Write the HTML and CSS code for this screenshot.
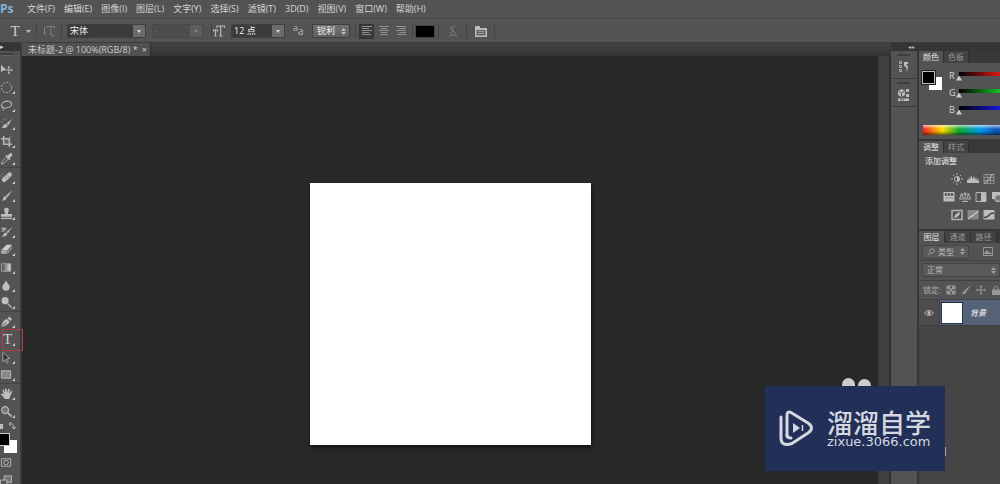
FILE: index.html
```html
<!DOCTYPE html>
<html lang="zh-CN">
<head>
<meta charset="utf-8">
<title>未标题-2</title>
<link rel="stylesheet" href="styles.css">
</head>
<body>
<div class="app">
  <header class="menubar">
    <span class="logo">Ps</span>
    <nav class="menus">
      <button>文件(F)</button><button>编辑(E)</button><button>图像(I)</button><button>图层(L)</button><button>文字(Y)</button><button>选择(S)</button><button>滤镜(T)</button><button>3D(D)</button><button>视图(V)</button><button>窗口(W)</button><button>帮助(H)</button>
    </nav>
  </header>

  <div class="options">
    <button class="opt-tool" aria-label="文字工具"><span class="serif-t">T</span><svg width="5" height="3" viewBox="0 0 5 3"><path d="M0 0h5L2.500 3z"/></svg></button>
    <i class="sep"></i>
    <button class="opt-orient" aria-label="切换文本取向"><svg width="12" height="12" viewBox="0 0 12 12"><path d="M4 3.500V1.500h7.500v2M7.700 1.500v7.500M6.500 9h2.500M1.500 2v7M0 7.500L1.500 9.500 3 7.500M8 11h3M10 9.500l1.500 1.500" fill="none" stroke="currentColor"/></svg></button>
    <i class="sep"></i>
    <div class="combo font"><select aria-label="字体"><option>宋体</option></select><span class="drop"></span></div>
    <div class="combo style"><select aria-label="字体样式" disabled><option>-</option></select><span class="drop"></span></div>
    <i class="sep"></i>
    <svg class="size-icon" width="12" height="12" viewBox="0 0 12 12"><path d="M4 3V1h7.500v2M7.700 1v10M6 11h3.500M.5 6.500V5h4v1.500M2.500 5v6M1.500 11h2" fill="none" stroke="currentColor" stroke-width="1.200"/></svg>
    <div class="combo size"><select aria-label="字号"><option>12 点</option></select><span class="drop"></span></div>
    <span class="aa"><sup>a</sup>a</span>
    <div class="spin sharp"><select aria-label="消除锯齿"><option>锐利</option></select><svg width="5" height="7" viewBox="0 0 5 7"><path d="M0 3l2.500-3L5 3zM0 4h5L2.500 7z"/></svg></div>
    <i class="sep"></i>
    <div class="aligns">
      <button class="on" aria-label="左对齐"><svg width="10" height="10" viewBox="0 0 10 10"><path d="M0 .5h10M0 2.500h7M0 4.500h10M0 6.500h7M0 8.500h9"/></svg></button>
      <button aria-label="居中对齐"><svg width="10" height="10" viewBox="0 0 10 10"><path d="M0 .5h10M2 2.500h6M0 4.500h10M2 6.500h6M1 8.500h8"/></svg></button>
      <button aria-label="右对齐"><svg width="10" height="10" viewBox="0 0 10 10"><path d="M0 .5h10M3 2.500h7M0 4.500h10M3 6.500h7M1 8.500h9"/></svg></button>
    </div>
    <i class="sep"></i>
    <button class="text-color" aria-label="文本颜色"></button>
    <i class="sep"></i>
    <button class="warp" aria-label="变形文字"><svg width="10" height="12" viewBox="0 0 10 12"><path d="M7 0Q6 3 2 4M2.500 1.500L5 5Q5 7 2 8M5 5.500L8 8M1 11.500Q5 8 9 11.500" fill="none" stroke="currentColor"/></svg></button>
    <i class="sep"></i>
    <button class="panel-btn" aria-label="字符面板"><svg width="12" height="11" viewBox="0 0 12 11"><path d="M0 0h5v2h7v9H0z" fill="#bbb"/><path d="M1.500 4h9v5.500h-9z" fill="#666"/><path d="M3 5.500h6M3 7.500h6" stroke="#999"/></svg></button>
    <i class="sep"></i>
  </div>

  <main class="workspace">
    <aside class="toolbox">
      <div class="collapse">▸</div>
      <div class="grip"></div>
      <div class="tools">
        <button aria-label="移动"><svg viewBox="0 0 14 14"><path d="M1 2v8l2.300-2L7 7.500z"/><path d="M9.500 4v7M6 7.500h7" class="l"/><path d="M9.500 3l1.500 2H8zM9.500 12L8 10h3zM14 7.500L12 6v3z"/></svg></button>
        <button class="more" aria-label="椭圆选框"><svg viewBox="0 0 14 14"><circle cx="7" cy="7" r="5.500" class="l" stroke-dasharray="2.300 1.200"/></svg></button>
        <button class="more" aria-label="套索"><svg viewBox="0 0 14 14"><ellipse cx="7" cy="6" rx="5.500" ry="3.500" class="l" stroke-width="1.300" transform="rotate(-12 7 6)"/><path d="M3 8q-2 1 0 2t0 3" class="l"/></svg></button>
        <button class="more" aria-label="快速选择"><svg viewBox="0 0 14 14"><path d="M13 2L7 7l2 2zM6.500 7.500Q4 7 3.500 9.500T1 11q5 2.500 7.500-1.500z"/><path d="M2 6q0-4 5-4" class="l" stroke-dasharray="1.500 1.500" stroke-width=".7"/></svg></button>
        <button class="more" aria-label="裁剪"><svg viewBox="0 0 14 14"><path d="M4 1v9h9M1 4h9v9" class="l" stroke-width="1.700"/><path d="M5 9L12 1" class="l" stroke-width=".6"/></svg></button>
        <button class="more" aria-label="吸管"><svg viewBox="0 0 14 14"><path d="M1.500 13l1-3L7 5.500 9 7.500 4.500 12z" class="l"/><path d="M6 4l1-1 1.500 1L10 2q2-2 3 0t-1 3l-1.500 1.500L11 8l-1 1z"/></svg></button>
        <button class="more" aria-label="修复画笔"><svg viewBox="0 0 14 14"><rect x="1" y="4.500" width="13" height="5" rx="2.500" transform="rotate(-43 7 7)"/><path d="M5 6l3 3M7 4l3 3" stroke="#888"/><path d="M1 6q0-4 4-4" class="l" stroke-dasharray="1 1" stroke-width=".7"/></svg></button>
        <button class="more" aria-label="画笔"><svg viewBox="0 0 14 14"><path d="M13.500 1L6.500 7l1.500 2zM6 7.500Q3.500 7.500 3.500 10T1 12q5 1.500 6.500-2.500z"/></svg></button>
        <button class="more" aria-label="仿制图章"><svg viewBox="0 0 14 14"><path d="M5.500 7.500q0-2-1-3.500a2.600 2.600 0 1 1 5 0q-1 1.500-1 3.500H13v3H1v-3zM1 11.500h12v1.300H1z"/></svg></button>
        <button class="more" aria-label="历史记录画笔"><svg viewBox="0 0 14 14"><path d="M13.500 2L7 7.500l1.500 1.500zM6.500 8Q4 8 4 10t-3 2q5 1.500 7-2z"/><path d="M1 3h6l-3 3z"/><path d="M1 6.500q4 1 6-2" class="l"/></svg></button>
        <button class="more" aria-label="橡皮擦"><svg viewBox="0 0 14 14"><path d="M7 2h6L8 8H1z" fill="#ccc"/><path d="M1 8.500h7v3H1z" fill="#aaa"/><path d="M8.500 8.300L13 3v3L8.500 11.500z" fill="#888"/></svg></button>
        <button class="more" aria-label="渐变"><svg viewBox="0 0 14 14"><defs><linearGradient id="gradient-tool"><stop stop-color="#444"/><stop offset="1" stop-color="#ddd"/></linearGradient></defs><path d="M1.500 3h10v8h-10z" fill="url(#gradient-tool)" stroke="#aaa"/></svg></button>
        <button class="more" aria-label="模糊"><svg viewBox="0 0 14 14"><path d="M6.500 1C7 4 10.500 6 10.500 8.700a4 4 0 0 1-8 0C2.500 6 6 4 6.500 1z"/></svg></button>
        <button class="more" aria-label="减淡"><svg viewBox="0 0 14 14"><circle cx="5.500" cy="5" r="3.800"/><path d="M8 8l4.500 4.500" class="l" stroke-width="1.500"/></svg></button>
        <button class="more" aria-label="钢笔"><svg viewBox="0 0 14 14"><path d="M1 13Q2 7 7 4l3.500 3.500Q7 12 1 13zM8 3.500l2-2L13 4.500l-2 2z"/><path d="M1.500 12.500L6.500 8" stroke="#555"/></svg></button>
        <button class="more picked" aria-label="横排文字"><span class="serif-t">T</span></button>
        <button class="more" aria-label="路径选择"><svg viewBox="0 0 14 14"><path d="M3 1.500v10l2.500-2.300L7.500 13l1.500-1-2-3.500 3.500-.5z" fill="#333" stroke="#aaa"/></svg></button>
        <button class="more" aria-label="矩形"><svg viewBox="0 0 14 14"><path d="M1.500 3h10v8h-10z" fill="#888" stroke="#bbb"/></svg></button>
        <button class="more" aria-label="抓手"><svg viewBox="0 0 14 14"><path d="M5 13Q3.500 10 1 8q0-1.500 2-.5L4 8 2.500 3q1-1 1.800.3L5.500 6.500 5.500 2q1-1.500 1.700 0l.3 4.300L9 2q1.500-.7 1.500.6L9.800 7 12 4q1.500 0 1 1.300L11 10l-1 3z"/></svg></button>
        <button class="more" aria-label="缩放"><svg viewBox="0 0 14 14"><circle cx="5.500" cy="5.500" r="3.700" fill="#777" stroke="#bbb" stroke-width="1.300"/><path d="M8.500 8.500l4 4" class="l" stroke-width="2"/></svg></button>
      </div>
      <svg class="swap" width="17" height="9" viewBox="0 0 17 9"><path d="M0 3h3v5H0z"/><path d="M10 3q4-1 4 4M11 1L9 3l2 2M12 6l2 2 2-2" class="l"/></svg>
      <div class="tool-colors"><button class="bg" aria-label="背景色"></button><button class="fg" aria-label="前景色"></button></div>
      <button class="mode" aria-label="快速蒙版"><svg viewBox="0 0 14 14"><path d="M1.500 3h10v8h-10z" class="l"/><circle cx="6.500" cy="7" r="2.500" class="l"/></svg></button>
      <button class="mode" aria-label="屏幕模式"><svg viewBox="0 0 14 14"><path d="M4.500 2h8v7h-8z" fill="#777" stroke="#bbb"/><path d="M.5 6.500h7v5h-7z" fill="#555" stroke="#bbb"/></svg></button>
    </aside>

    <section class="document">
      <div class="tabstrip"><div class="doc-tab"><span>未标题-2 @ 100%(RGB/8) *</span><button aria-label="关闭">×</button></div></div>
      <div class="view">
        <div class="stage"><div class="paper"></div></div>
        <div class="scroll"></div>
      </div>
    </section>

    <div class="docks">
      <div class="dock-head">◂◂</div>
      <div class="dock-cols">
        <div class="dock">
          <button aria-label="历史记录"><svg width="12" height="14" viewBox="0 0 12 14"><path d="M1.500 1.500h2v2h-2zM1.500 5.500h2v2h-2zM1.500 9.500h2v2h-2z" fill="none" stroke="#aaa"/><path d="M6 2h4v2H8q4 3 0 8 2-5-2-6z"/></svg></button>
          <button aria-label="属性"><svg width="12" height="14" viewBox="0 0 12 14"><path d="M3.500 1L7 3v4L3.500 9 0 7V3z" fill="#bbb"/><path d="M.5 3l3 2 3-2M3.500 5v3.500" fill="none" stroke="#555"/><path d="M8 1h3v3H8zM8 6h3v3H8zM0 10.500h11v2.500H0z"/><path d="M2 11.800h4" stroke="#666"/></svg></button>
        </div>
        <div class="panels">
          <section class="panel color">
            <div class="tabs"><button class="active">颜色</button><button>色板</button></div>
            <div class="color-body">
              <div class="chips"><button class="bg" aria-label="背景色"></button><button class="fg" aria-label="前景色"></button></div>
              <div class="sliders">
                <label><span>R</span><input class="r" type="range" min="0" max="255" value="0"></label>
                <label><span>G</span><input class="g" type="range" min="0" max="255" value="0"></label>
                <label><span>B</span><input class="b" type="range" min="0" max="255" value="0"></label>
              </div>
            </div>
            <div class="spectrum"></div>
          </section>
          <section class="panel adjust">
            <div class="tabs"><button class="active">调整</button><button>样式</button></div>
            <p>添加调整</p>
            <div class="icons in"><svg viewBox="0 0 12 12"><circle cx="6" cy="6" r="2.500" class="l"/><path d="M6 3.500a2.500 2.500 0 0 1 0 5z"/><path d="M6 0v2M6 10v2M0 6h2M10 6h2M2 2l1.200 1.200M8.800 8.800L10 10M2 10l1.200-1.200M8.800 3.200L10 2" class="l"/></svg><svg viewBox="0 0 12 12"><path d="M0 10V6l1 2 1-4 1 3 1-5 1.500 4L7 3l1 4 1-3 1 4 1-3 1 4v1z"/></svg><svg viewBox="0 0 12 12"><path d="M1 1.500h10v9H1zM4.300 1v9M7.600 1v9M1 4.500h10M1 7.500h10" class="l" stroke-width=".6"/><path d="M1 10Q6 9 7 5t4-4" class="l"/></svg></div>
            <div class="icons"><svg viewBox="0 0 12 12"><path d="M.5 1h11v9.500H.5z"/><path d="M2 2.500h2v2H2zM5 2.500h2v2H5zM8 2.500h2v2H8zM2 7h8" fill="#555" stroke="#555" stroke-width=".5"/></svg><svg viewBox="0 0 12 12"><path d="M1.500 3h9M6 1v9M3 10.500h6M2.500 3L.5 8h4zM9.500 3l-2 5h4z" class="l"/></svg><svg viewBox="0 0 12 12"><path d="M1 1.500h10v9H1z" class="l"/><path d="M6 2h5v8H6z"/></svg><svg viewBox="0 0 12 12"><path d="M1 1h9v7H1z"/><circle cx="7" cy="7" r="3.500" fill="#777" stroke="#ccc"/></svg></div>
            <div class="icons in"><svg viewBox="0 0 12 12"><path d="M1 1.500h10v9H1z" class="l" stroke-width="1.500"/><path d="M3 9Q4 4 9 3 9 8 3 9z"/></svg><svg viewBox="0 0 12 12"><path d="M.5 1h11v9.500H.5z" fill="#888"/><path d="M1 10l3-3h2l2-3h2l1-2" stroke="#ddd" fill="none"/></svg><svg viewBox="0 0 12 12"><path d="M.5 1h11v9.500H.5z"/><path d="M1 8.500l3-.5 4-3.500 3-.5" stroke="#444" stroke-width="1.500" fill="none"/></svg></div>
          </section>
          <section class="panel layers">
            <div class="tabs"><button class="active">图层</button><button>通道</button><button>路径</button></div>
            <div class="filter">
              <div class="spin kind"><svg width="8" height="8" viewBox="0 0 8 8"><circle cx="5" cy="3" r="2.300" class="l"/><path d="M3.300 4.700L1 7.500" class="l"/></svg><select aria-label="滤镜类型"><option>类型</option></select><svg width="5" height="7" viewBox="0 0 5 7"><path d="M0 3l2.500-3L5 3zM0 4h5L2.500 7z"/></svg></div>
              <svg width="10" height="9" viewBox="0 0 10 9"><path d="M.5.500h9v8h-9z" class="l"/><path d="M1 7l3-4 2 3 1-1 2 2z"/></svg>
            </div>
            <div class="blend"><div class="spin"><select aria-label="混合模式"><option>正常</option></select><svg width="5" height="7" viewBox="0 0 5 7"><path d="M0 3l2.500-3L5 3zM0 4h5L2.500 7z"/></svg></div></div>
            <div class="lock"><span>锁定:</span><svg viewBox="0 0 10 10"><path d="M1 1h8v8H1z" class="l"/><path d="M1 1h3v3H1zM6 1h3v3H6zM3.500 3.500h3v3h-3zM1 6h3v3H1zM6 6h3v3H6z"/></svg><svg viewBox="0 0 10 10"><path d="M10 0L4 5l1.500 1.500zM4 5.500Q2 5.500 2 8L0 9q4 1 5.500-2z"/></svg><svg viewBox="0 0 10 10"><path d="M5 1v8M1 5h8" class="l"/><path d="M5 0l1.500 2h-3zM5 10L3.500 8h3zM0 5l2-1.500v3zM10 5L8 6.500v-3z"/></svg><svg viewBox="0 0 10 10"><path d="M1 4.500h8V10H1z"/><path d="M3 5V3q0-2 2-2t2 2v2" class="l"/></svg></div>
            <div class="layer"><button class="eye" aria-label="可见性"><svg width="10" height="8" viewBox="0 0 10 8"><path d="M.5 4Q5-1 9.500 4 5 9 .5 4z" class="l"/><circle cx="5" cy="4" r="1.700"/></svg></button><div class="layer-main"><span class="thumb"></span><span class="name">背景</span></div></div>
          </section>
        </div>
      </div>
    </div>
  </main>

  <div class="watermark">
    <i class="ear left"></i><i class="ear right"></i><i class="tick"></i>
    <svg width="36" height="38" viewBox="0 0 36 38"><path d="M8 26V5Q8 1 12 2.500L29 13q7 5 0 10L13 33.500Q2 37 2 28V7" fill="none" stroke="#d5d8e0" stroke-width="3" stroke-linecap="round"/><path d="M8 25q0 3 4 3" fill="none" stroke="#d5d8e0" stroke-width="3" stroke-linecap="round"/><path d="M14 13l7 5-7 5z" fill="#d5d8e0"/><path d="M23.500 15v6" stroke="#d5d8e0" stroke-width="1.500"/></svg>
    <div class="brand"><strong>溜溜自学</strong><span>zixue.3066.com</span></div>
  </div>
</div>
</body>
</html>
```

FILE: styles.css
```css
* { box-sizing: border-box; }
body {
  margin: 0;
  background: #282828;
  color: #d6d6d6;
  font-family: "Open Sans", "Noto Sans CJK SC", sans-serif;
  font-size: 9px;
  line-height: 12px;
}
button, select, input { font: inherit; color: inherit; margin: 0; padding: 0; border: 0; background: none; }
button { display: flex; align-items: center; justify-content: center; }
svg { display: block; flex: none; fill: #bdbdbd; }
.l { fill: none; stroke: #b4b4b4; }
.app { position: relative; display: flex; flex-direction: column; height: 100vh; overflow: hidden; }

.menubar { display: flex; align-items: center; height: 19px; flex: none; background: #535353; border-bottom: 1px solid #434343; }
.logo { width: 24px; color: #7fb2dc; font: bold 12px/16px "Open Sans", sans-serif; }
.menus { display: flex; gap: 9px; padding-left: 3px; white-space: nowrap; }

.options { display: flex; align-items: center; height: 24px; flex: none; background: #535353; border-top: 1px solid #606060; border-bottom: 1px solid #3b3b3b; white-space: nowrap; }
.sep { width: 1px; height: 14px; flex: none; background: #444; }
.serif-t { font: 15px/16px "Liberation Serif", serif; color: #ccc; }
.opt-tool { gap: 6px; padding-left: 5px; width: 36px; }
.opt-orient { width: 24px; color: #808080; }
.combo { position: relative; height: 14px; background: #3b3b3b; border: 1px solid #404040; color: #eee; }
.combo select { width: 100%; height: 12px; padding-left: 2px; appearance: none; line-height: 12px; display: block; }
.drop { position: absolute; top: 0; right: 0; width: 12px; height: 12px; background: #6b6b6b; pointer-events: none; }
.drop::after { content: ""; position: absolute; left: 4px; top: 5px; border: 2px solid transparent; border-top: 3px solid #ddd; }
.font { width: 79px; margin-left: 5px; }
.style { width: 51px; margin: 0 8px 0 6px; background: #4d4d4d; border-color: #494949; color: #777; }
.style .drop { background: #5d5d5d; }
.style .drop::after { border-top-color: #888; }
.size-icon { color: #bbb; margin-left: 1px; }
.size { width: 54px; margin-left: 6px; }
.aa { width: 27px; padding-left: 8px; font-size: 10px; color: #bbb; }
.aa sup { font-size: 9px; line-height: 1px; }
.spin { display: flex; align-items: center; height: 14px; padding: 0 3px 0 4px; border: 1px solid #3e3e3e; border-radius: 1px; background: linear-gradient(#707070, #606060); }
.spin select { appearance: none; flex: 1; min-width: 0; height: 12px; line-height: 12px; }
.sharp { width: 38px; color: #eee; }
.sharp + .sep { margin-left: 5px; }
.aligns { display: flex; gap: 2px; padding: 0 4px 0 3px; }
.aligns button { width: 15px; height: 15px; }
.aligns .on { background: #3a3a3a; border: 1px solid #333; }
.aligns svg { stroke: #909090; }
.text-color { width: 18px; height: 11px; margin: 0 4px 0 3px; background: #000; outline: 1px solid #444; }
.warp { width: 27px; color: #808080; }
.panel-btn { width: 27px; }

.workspace { display: flex; flex: 1; min-height: 0; }
.toolbox { width: 22px; flex: none; background: #535353; border-right: 2px solid #3a3a3a; overflow: visible; }
.collapse { height: 8px; background: #353535; font-size: 7px; line-height: 8px; }
.grip { width: 14px; height: 3px; margin: 2px 0 4px; background: #3e3e3e; border-bottom: 1px solid #626262; }
.tools { display: flex; flex-direction: column; }
.tools button { position: relative; width: 20px; height: 18px; justify-content: flex-start; }
.tools svg, .mode svg { width: 13px; height: 13px; }
.tools .serif-t { padding-left: 3px; }
.more::after { content: ""; position: absolute; right: 5px; bottom: 2px; border-left: 3px solid transparent; border-bottom: 3px solid #ccc; }
.picked::before { content: ""; position: absolute; inset: -1px -3px -3px 2px; border: 1px solid #b23c40; }
.picked { z-index: 1; }
.tools button:nth-child(6), .tools button:nth-child(14), .tools button:nth-child(18) { border-bottom: 1px solid #444; }
.swap { margin: 1px 0 3px; }
.tool-colors { position: relative; width: 17px; height: 20px; }
.tool-colors button { position: absolute; width: 13px; height: 13px; }
.tool-colors .bg { left: 4px; top: 7px; background: #fff; }
.tool-colors .fg { left: -3px; top: 0; background: #000; border: 1px solid #ccc; }
.mode { height: 18px; }

.document { display: flex; flex-direction: column; flex: 1; min-width: 0; }
.tabstrip { height: 13px; flex: none; background: linear-gradient(#434343, #333); }
.doc-tab { display: inline-flex; align-items: center; height: 13px; padding: 0 3px 0 6px; gap: 4px; background: #505050; border-right: 1px solid #2d2d2d; color: #ccc; font-size: 9px; line-height: 12px; white-space: nowrap; vertical-align: top; }
.doc-tab { margin: 0; }
.view { display: flex; flex: 1; min-height: 0; }
.stage { flex: 1; padding-top: 127px; background: #282828; }
.paper { width: 281px; height: 262px; margin: 0 auto; background: #fff; box-shadow: 1px 2px 3px #111; }
.scroll { width: 13px; flex: none; background: #404040; border-right: 2px solid #303030; border-left: 1px solid #353535; }

.docks { width: 109px; flex: none; display: flex; flex-direction: column; background: #454545; }
.dock-head { height: 8px; flex: none; padding-left: 17px; background: #353535; color: #bbb; font-size: 6px; line-height: 8px; }
.dock-cols { display: flex; flex: 1; min-height: 0; }
.dock { width: 28px; flex: none; background: #535353; border-right: 2px solid #373737; }
.dock button { width: 100%; height: 28px; padding-top: 4px; border-bottom: 1px solid #3c3c3c; background: linear-gradient(#3e3e3e, #3e3e3e) 6px 3px / 13px 2px no-repeat; }
.panels { flex: 1; min-width: 0; overflow: hidden; }
.panel { background: #535353; font-size: 8px; white-space: nowrap; overflow: hidden; }
.tabs { display: flex; height: 12px; background: #383838; }
.tabs button { width: 25px; flex: none; line-height: 12px; color: #999; border-right: 1px solid #303030; background: #424242; }
.tabs .active { background: #535353; color: #e0e0e0; }
.color { height: 90px; border-bottom: 2px solid #363636; }
.color-body { display: flex; gap: 7px; padding: 4px 0 0 3px; }
.chips { position: relative; width: 20px; height: 20px; margin-top: 4px; flex: none; }
.chips button { position: absolute; width: 13px; height: 13px; }
.chips .bg { left: 7px; top: 6px; background: #fff; }
.chips .fg { left: 0; top: 0; background: #000; border: 1px solid #bbb; outline: 1px solid #222; }
.sliders { flex: 1; min-width: 0; }
.sliders label { display: flex; align-items: center; height: 17px; }
.sliders span { width: 7px; flex: none; font-size: 9px; }
.sliders input { appearance: none; width: 44px; height: 12px; flex: none; }
.sliders input::-webkit-slider-runnable-track { height: 10px; background: linear-gradient(90deg, #000, var(--end)) 3px 1px / 100% 4px no-repeat; }
.sliders input::-webkit-slider-thumb { appearance: none; width: 6px; height: 5px; margin-top: 5px; background: #ccc; clip-path: polygon(50% 0, 100% 100%, 0 100%); }
.r { --end: #f01818; } .g { --end: #18d028; } .b { --end: #1818f0; }
.spectrum { height: 10px; margin: 7px 0 0 4px; background: linear-gradient(#fffa, #fff0 40%, #0000 60%, #0008), linear-gradient(90deg, #e22, #fd0 25%, #1a3 47%, #09e 75%, #15b 95%); }
.adjust { height: 90px; border-bottom: 2px solid #363636; }
.adjust p { margin: 2px 0 3px; padding-left: 6px; color: #eee; }
.icons { display: flex; gap: 4px; height: 18px; align-items: center; padding-left: 24px; }
.icons.in { padding-left: 32px; }
.icons svg { width: 12px; height: 12px; }
.layers .tabs button { width: 26px; }
.filter { display: flex; align-items: center; gap: 14px; height: 18px; padding-left: 3px; border-bottom: 1px solid #414141; color: #bbb; }
.kind { width: 47px; gap: 3px; flex: none; }
.layers .spin { background: #5a5a5a; border-color: #464646; }
.layers .spin svg, .filter > svg { opacity: .7; }
.blend { height: 20px; padding: 2px 0 0 3px; border-bottom: 1px solid #414141; color: #bbb; }
.lock { display: flex; align-items: center; gap: 5px; height: 19px; padding-left: 4px; color: #aaa; border-bottom: 1px solid #414141; }
.lock svg { width: 10px; height: 10px; opacity: .65; }
.layer { display: flex; height: 26px; background: #4d4d4d; border-bottom: 1px solid #3d3d3d; }
.eye { width: 21px; flex: none; border-right: 1px solid #3f3f3f; }
.layer-main { display: flex; flex: 1; align-items: center; gap: 7px; padding-left: 1px; background: #566277; }
.thumb { width: 22px; height: 22px; flex: none; background: #fff; border: 1px solid #253448; }
.name { font-style: italic; color: #fff; }

.watermark { position: absolute; right: 55px; bottom: 13px; display: flex; align-items: center; gap: 12px; width: 180px; height: 85px; padding-left: 14px; background: #223057; color: #d5d8e0; }
.brand { display: flex; flex-direction: column; }
.brand strong { font: 500 26px/26px "Noto Sans CJK SC", sans-serif; }
.brand span { font: 13px/14px "DejaVu Sans", sans-serif; }
.ear { position: absolute; top: -8px; width: 13px; height: 8px; border-radius: 7px 7px 0 0; background: #ccc; }
.ear.left { left: 77px; }
.ear.right { left: 93px; top: -7px; height: 7px; }
.tick { position: absolute; right: -1px; top: 61px; width: 1px; height: 9px; background: #aaa; }
```
